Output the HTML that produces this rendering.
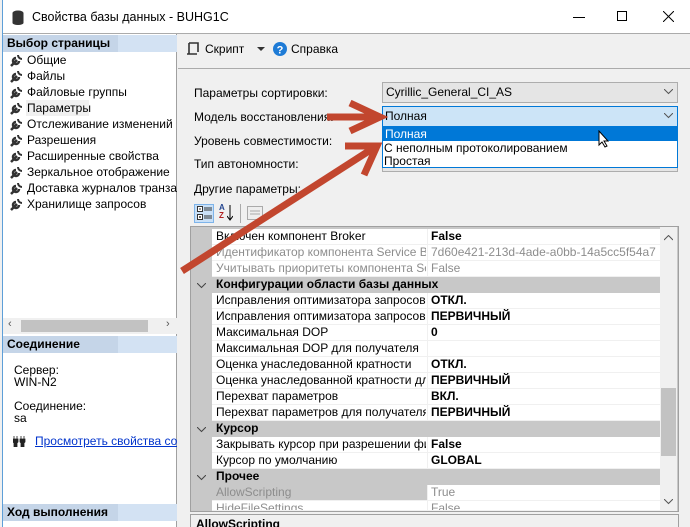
<!DOCTYPE html>
<html><head><meta charset="utf-8"><style>
*{margin:0;padding:0;box-sizing:border-box}
html,body{width:690px;height:527px;overflow:hidden}
body{background:#f0f0f0;font-family:"Liberation Sans",sans-serif;font-size:12px;color:#000;position:relative}
.a{position:absolute;white-space:nowrap}
.hdr{position:absolute;left:3px;width:174px;height:17px;background:linear-gradient(90deg,#c5d5e8 0,#c5d5e8 115px,#d3e2f3 115px);font-weight:bold;padding:1px 0 0 4px;font-size:12px;white-space:nowrap}
.it{position:absolute;left:10px;height:16px;line-height:16px;white-space:nowrap}
.it svg{position:absolute;left:0;top:2px}
.it span{position:absolute;left:17px}
.row{position:absolute;left:212px;width:448px;height:16px;line-height:15px;border-bottom:1px solid #f0f0f0;background:#fff;white-space:nowrap}
.row .n{position:absolute;left:4px;width:210px;overflow:hidden}
.row .v{position:absolute;left:215px;top:0;height:16px;border-left:1px solid #f0f0f0;padding-left:3px;width:233px;overflow:hidden}
.b{font-weight:bold}
.g{color:#8d8d8d}
.cat{position:absolute;left:191px;width:469px;height:16px;line-height:15px;background:#c8c8c8;font-weight:bold;white-space:nowrap}
.cat span{position:absolute;left:25px}
.cat svg{position:absolute;left:6px;top:6px}
</style></head><body>
<div class="a" style="left:0;top:0;width:690px;height:34px;background:#fff;border-bottom:1px solid #ababab"></div>
<div class="a" style="left:0;top:0;width:3px;height:527px;background:#f0f0f0;border-right:1px solid #5e9fd8"></div>
<svg class="a" style="left:12px;top:10px" width="12" height="15"><ellipse cx="6" cy="3" rx="5.5" ry="2.5" fill="#333"/><rect x="0.5" y="3" width="11" height="10" fill="#333"/><ellipse cx="6" cy="13" rx="5.5" ry="2" fill="#333"/></svg>
<div class="a" style="left:32px;top:10px;font-size:12.5px">Свойства базы данных - BUHG1C</div>
<div class="a" style="left:573px;top:17px;width:12px;height:1px;background:#000"></div>
<div class="a" style="left:617px;top:11px;width:10px;height:10px;border:1px solid #000"></div>
<svg class="a" style="left:663px;top:11px" width="11" height="11"><path d="M0 0L11 11M11 0L0 11" stroke="#000" stroke-width="1"/></svg>
<div class="a" style="left:3px;top:34px;width:174px;height:493px;background:#fff;border-right:1px solid #a0a0a0"></div>
<div class="hdr" style="top:35px">Выбор страницы</div>
<div class="a" style="left:26px;top:100px;width:63px;height:16px;background:#f0f0f0"></div>
<div id="items"></div>
<div class="a" style="left:3px;top:318px;width:174px;height:16px;background:#f0f0f0"></div>
<div class="a" style="left:21px;top:320px;width:127px;height:12px;background:#c2c2c2"></div>
<div class="a" style="left:8px;top:318px;color:#555;font-size:11px">&#8249;</div>
<div class="a" style="left:166px;top:318px;color:#555;font-size:11px">&#8250;</div>
<div class="hdr" style="top:336px">Соединение</div>
<div class="a" style="left:14px;top:363px">Сервер:</div>
<div class="a" style="left:14px;top:375px">WIN-N2</div>
<div class="a" style="left:14px;top:399px">Соединение:</div>
<div class="a" style="left:14px;top:411px">sa</div>
<svg class="a" style="left:13px;top:436px" width="13" height="11"><path d="M1 0v4M4 0v4M0 3h5v3l-1 1v4h-3v-4l-1-1z M8 0v4M11 0v4M7 3h5v3l-1 1v4h-3v-4l-1-1z" fill="#222" stroke="#222" stroke-width="0.8"/></svg>
<div class="a" style="left:35px;top:434px;color:#0033cc;text-decoration:underline;width:142px;overflow:hidden">Просмотреть свойства соединения</div>
<div class="hdr" style="top:504px">Ход выполнения</div>
<div class="a" style="left:178px;top:68px;width:512px;height:1px;background:#ababab"></div>
<svg class="a" style="left:186px;top:42px" width="13" height="13"><path d="M3 1h9v9M3 1v11H1M3 12h8" fill="none" stroke="#333" stroke-width="1.6"/></svg>
<div class="a" style="left:205px;top:42px">Скрипт</div>
<svg class="a" style="left:257px;top:47px" width="8" height="5"><path d="M0 0h8L4 4z" fill="#333"/></svg>
<svg class="a" style="left:273px;top:42px" width="14" height="14"><circle cx="7" cy="7" r="7" fill="#1e7bd6"/><text x="7" y="11.5" font-size="11" font-weight="bold" fill="#fff" text-anchor="middle" font-family="Liberation Sans">?</text></svg>
<div class="a" style="left:291px;top:42px">Справка</div>
<div class="a" style="left:194px;top:86px">Параметры сортировки:</div>
<div class="a" style="left:194px;top:110px">Модель восстановления:</div>
<div class="a" style="left:194px;top:134px">Уровень совместимости:</div>
<div class="a" style="left:194px;top:157px">Тип автономности:</div>
<div class="a" style="left:194px;top:182px">Другие параметры:</div>
<div class="a" style="left:382px;top:82px;width:296px;height:21px;background:#e5e5e5;border:1px solid #adadad;padding:2px 0 0 3px">Cyrillic_General_CI_AS</div>
<svg class="a" style="left:664px;top:89px" width="9" height="6"><path d="M0 0l4.5 4.5L9 0" fill="none" stroke="#555"/></svg>
<div class="a" style="left:382px;top:106px;width:296px;height:21px;background:#cce4f7;border:1px solid #0078d7;padding:2px 0 0 2px">Полная</div>
<svg class="a" style="left:664px;top:113px" width="9" height="6"><path d="M0 0l4.5 4.5L9 0" fill="none" stroke="#555"/></svg>
<div class="a" style="left:382px;top:152px;width:296px;height:20px;background:#e5e5e5;border:1px solid #adadad"></div>
<div class="a" style="left:382px;top:126px;width:296px;height:42px;background:#fff;border:1px solid #0078d7"></div>
<div class="a" style="left:383px;top:127px;width:294px;height:14px;background:#0078d7"></div>
<div class="a" style="left:385px;top:127px;color:#fff">Полная</div>
<div class="a" style="left:384px;top:141px">С неполным протоколированием</div>
<div class="a" style="left:384px;top:154px">Простая</div>
<svg class="a" style="left:598px;top:130px" width="12" height="18"><path d="M1 1v14l3-3 3 5 2-1-3-5h4z" fill="#fff" stroke="#000"/></svg>
<div class="a" style="left:194px;top:204px;width:20px;height:19px;background:#c9e0f7;border:1px solid #7eb4ea"></div>
<svg class="a" style="left:197px;top:206px" width="16" height="15"><rect x="0.5" y="0.5" width="5" height="5" fill="#fff" stroke="#333"/><rect x="0.5" y="8.5" width="5" height="5" fill="#fff" stroke="#333"/><path d="M2 3h2M2 11h2M3 10v2M7 2h8M7 4h8M7 10h8M7 12h8" stroke="#333"/></svg>
<div class="a" style="left:219px;top:204px;font-size:8px;color:#23458f;line-height:8px;font-weight:bold">A<br><span style="color:#b02020">Z</span></div>
<svg class="a" style="left:227px;top:205px" width="6" height="16"><path d="M3 0v14M0 11l3 4 3-4" fill="none" stroke="#000"/></svg>
<div class="a" style="left:240px;top:204px;width:1px;height:19px;background:#aaa"></div>
<svg class="a" style="left:247px;top:206px" width="16" height="14"><rect x="0.5" y="0.5" width="15" height="13" fill="#eee" stroke="#aaa"/><path d="M3 5h10M3 8h10" stroke="#aaa"/></svg>
<div class="a" style="left:190px;top:226px;width:489px;height:286px;background:#c8c8c8;border:1px solid #a0a0a0"></div>
<div id="grid"></div>
<div class="a" style="left:660px;top:227px;width:17px;height:284px;background:#f0f0f0"></div>
<div class="a" style="left:661px;top:388px;width:15px;height:68px;background:#c2c2c2"></div>
<svg class="a" style="left:664px;top:235px" width="9" height="6"><path d="M0 5l4.5-4.5L9 5" fill="none" stroke="#555"/></svg>
<svg class="a" style="left:664px;top:499px" width="9" height="6"><path d="M0 0l4.5 4.5L9 0" fill="none" stroke="#555"/></svg>
<div class="a" style="left:190px;top:514px;width:489px;height:13px;background:#f0f0f0;border:1px solid #a0a0a0;border-bottom:none;font-weight:bold;padding:2px 0 0 5px;overflow:hidden">AllowScripting</div>
<svg class="a" style="left:0;top:0" width="690" height="527">
<g stroke="#c2462e" stroke-width="7" fill="none" stroke-linecap="butt">
<path d="M327 117H376"/>
<path d="M350 103L380 117L350 131"/>
<path d="M182 271L372 149"/>
<path d="M345 146L377 146L364 175"/>
</g>
</svg>
<script>
var items=["Общие","Файлы","Файловые группы","Параметры","Отслеживание изменений","Разрешения","Расширенные свойства","Зеркальное отображение","Доставка журналов транзакций","Хранилище запросов"];
var h="";items.forEach(function(t,i){h+='<div class="it" style="top:'+(52+i*16)+'px;width:167px;overflow:hidden"><svg width="13" height="13"><path d="M1 12l6-6M6 4a3 3 0 1 0 3 3" stroke="#333" stroke-width="2.5" fill="none"/><path d="M8 1a4 4 0 0 0 4 4" stroke="#333" stroke-width="2" fill="none"/></svg><span>'+t+'</span></div>'});
document.getElementById("items").innerHTML=h;
var rows=[["r","Включен компонент Broker","False","b"],["r","Идентификатор компонента Service Broker","7d60e421-213d-4ade-a0bb-14a5cc5f54a7","g"],["r","Учитывать приоритеты компонента Service Broker","False","g"],["c","Конфигурации области базы данных"],["r","Исправления оптимизатора запросов","ОТКЛ.","b"],["r","Исправления оптимизатора запросов для получателя","ПЕРВИЧНЫЙ","b"],["r","Максимальная DOP","0","b"],["r","Максимальная DOP для получателя","",""],["r","Оценка унаследованной кратности","ОТКЛ.","b"],["r","Оценка унаследованной кратности для получателя","ПЕРВИЧНЫЙ","b"],["r","Перехват параметров","ВКЛ.","b"],["r","Перехват параметров для получателя","ПЕРВИЧНЫЙ","b"],["c","Курсор"],["r","Закрывать курсор при разрешении фиксации","False","b"],["r","Курсор по умолчанию","GLOBAL","b"],["c","Прочее"],["s","AllowScripting","True","g"],["r","HideFileSettings","False","g"]];
var g="";rows.forEach(function(r,i){var t=229+i*16;
var clip=Math.max(0,Math.min(16,511-t));
if(r[0]=="c"){g+='<div class="cat" style="top:'+t+'px"><svg width="9" height="6"><path d="M0 0l4.5 4.5L9 0" fill="none" stroke="#444"/></svg><span>'+r[1]+'</span></div>'}
else{var g2=r[3]=="g";g+='<div class="row" style="top:'+t+'px;height:'+clip+'px;overflow:hidden;'+(r[0]=="s"?'background:#c8c8c8':'')+'"><div class="n'+(g2?' g':'')+'">'+r[1]+'</div><div class="v '+r[3]+'" style="background:#fff">'+r[2]+'</div></div>'}});
document.getElementById("grid").innerHTML=g;
</script>
</body></html>
